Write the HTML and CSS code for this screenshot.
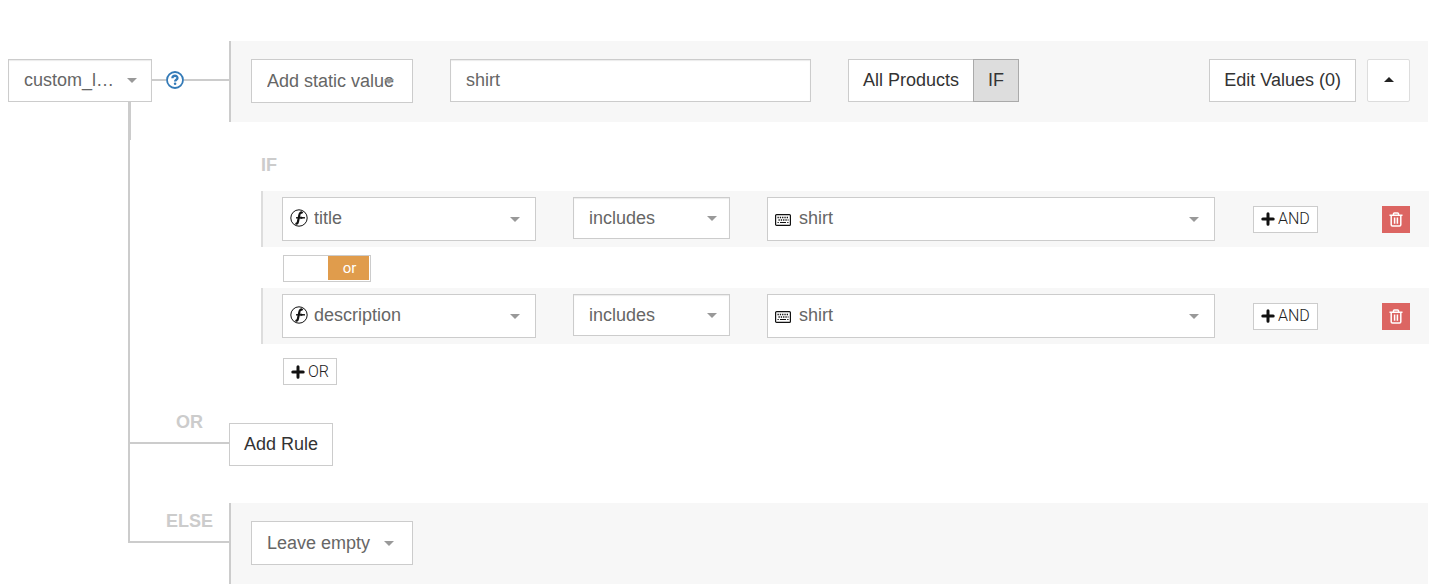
FILE: index.html
```html
<!DOCTYPE html>
<html lang="en">
<head>
  <meta charset="utf-8">
  <title>Edit Rules</title>
  <link rel="stylesheet" href="styles.css">
</head>
<body>
  <svg class="sprite" aria-hidden="true">
    <symbol id="icon-function" viewBox="0 0 18 18">
      <circle cx="9" cy="9" r="8.2" fill="none" stroke="#111" stroke-width="1"/>
      <path d="M12.4 4.4C11.2 2.6 9.8 3.6 9.3 6.2L8 12.4c-.4 2-1.2 2.8-2.6 2" fill="none" stroke="#111" stroke-width="2.2"/>
      <path d="M6 8.8h9" stroke="#111" stroke-width="1.4"/>
      <path d="M10.5 7.3l3.2 1.5-3.2 1.4z" fill="#111"/>
    </symbol>
    <symbol id="icon-keyboard" viewBox="0 0 16 12">
      <rect x=".6" y=".6" width="14.8" height="10.8" rx="1" fill="#fff" stroke="#111" stroke-width="1.2"/>
      <path d="M2.5 3.5h11M3.5 6h10" stroke="#111" stroke-width="1.3" stroke-dasharray="1.3 1"/>
      <path d="M2.5 8.5h1.3M5 8.5h6M12.2 8.5h1.3" stroke="#111" stroke-width="1.2"/>
    </symbol>
    <symbol id="icon-plus" viewBox="0 0 14 14">
      <path d="M7 1.8v10.4M1.8 7h10.4" stroke="#111" stroke-width="3" stroke-linecap="round"/>
    </symbol>
    <symbol id="icon-trash" viewBox="0 0 14 15">
      <path d="M.5 3.2h13M4.5 3V1.7q0-.8.8-.8h3.4q.8 0 .8.8V3M2.2 3.5v9.3q0 1.2 1.2 1.2h7.2q1.2 0 1.2-1.2V3.5M5.6 5.5v6.3M8.4 5.5v6.3" fill="none" stroke="#fff" stroke-width="1.5"/>
    </symbol>
  </svg>

  <main class="rules">
    <div class="rule">
      <div class="branch">
        <div class="branch-head">
          <div class="select select-attribute">
            <select aria-label="Attribute">
              <option>custom_l…</option>
            </select>
          </div>
          <span class="line line-short"></span>
          <button type="button" class="btn-help" aria-label="Help">
            <svg viewBox="0 0 18 18" width="18" height="18">
              <circle cx="9" cy="9" r="8" fill="#fff" stroke="#337ab7" stroke-width="1.8"/>
              <path d="M6.4 7.2C6.5 3.9 11.6 4 11.5 7c0 1.7-2.4 1.7-2.4 3.4" fill="none" stroke="#337ab7" stroke-width="2.3"/>
              <circle cx="9.1" cy="12.8" r="1.3" fill="#337ab7"/>
            </svg>
          </button>
          <span class="line"></span>
        </div>
        <div class="stem stem-thick"></div>
      </div>
      <div class="panel">
        <div class="select select-type">
          <select aria-label="Value type">
            <option>Add static value</option>
          </select>
        </div>
        <input type="text" class="static-value" value="shirt" aria-label="Static value">
        <div class="btn-group">
          <button type="button" class="btn">All Products</button>
          <button type="button" class="btn active">IF</button>
        </div>
        <div class="panel-actions">
          <button type="button" class="btn">Edit Values (0)</button>
          <button type="button" class="btn btn-collapse" aria-label="Collapse"></button>
        </div>
      </div>
    </div>

    <div class="rule">
      <div class="branch">
        <div class="stem stem-thick stem-end"></div>
        <div class="stem"></div>
      </div>
      <div class="conditions">
        <h2 class="keyword">IF</h2>
        <div class="condition">
          <div class="select select-icon">
            <svg class="icon-function"><use href="#icon-function"/></svg>
            <select aria-label="Field">
              <option>title</option>
            </select>
          </div>
          <div class="select select-operator">
            <select aria-label="Operator">
              <option>includes</option>
            </select>
          </div>
          <div class="select select-icon">
            <svg class="icon-keyboard"><use href="#icon-keyboard"/></svg>
            <select aria-label="Value">
              <option>shirt</option>
            </select>
          </div>
          <div class="condition-actions">
            <button type="button" class="btn-small"><svg><use href="#icon-plus"/></svg>AND</button>
            <button type="button" class="btn-delete" aria-label="Delete"><svg><use href="#icon-trash"/></svg></button>
          </div>
        </div>

        <label class="toggle">
          <input type="checkbox" aria-label="or" checked>
          <span class="toggle-on">or</span>
        </label>

        <div class="condition">
          <div class="select select-icon">
            <svg class="icon-function"><use href="#icon-function"/></svg>
            <select aria-label="Field">
              <option>description</option>
            </select>
          </div>
          <div class="select select-operator">
            <select aria-label="Operator">
              <option>includes</option>
            </select>
          </div>
          <div class="select select-icon">
            <svg class="icon-keyboard"><use href="#icon-keyboard"/></svg>
            <select aria-label="Value">
              <option>shirt</option>
            </select>
          </div>
          <div class="condition-actions">
            <button type="button" class="btn-small"><svg><use href="#icon-plus"/></svg>AND</button>
            <button type="button" class="btn-delete" aria-label="Delete"><svg><use href="#icon-trash"/></svg></button>
          </div>
        </div>

        <button type="button" class="btn-small btn-or"><svg><use href="#icon-plus"/></svg>OR</button>
      </div>
    </div>

    <div class="rule rule-add">
      <div class="branch">
        <div class="joint keyword">OR</div>
        <div class="stem"></div>
      </div>
      <button type="button" class="btn">Add Rule</button>
    </div>

    <div class="rule">
      <div class="branch">
        <div class="joint keyword">ELSE</div>
      </div>
      <div class="panel">
        <div class="select select-type">
          <select aria-label="Otherwise">
            <option>Leave empty</option>
          </select>
        </div>
      </div>
    </div>
  </main>
</body>
</html>
```

FILE: styles.css
```css
* {
  box-sizing: border-box;
}

body {
  margin: 0;
  background-color: #fff;
  color: #333;
  font-family: "Liberation Sans", Arial, sans-serif;
  font-size: 18px;
  line-height: 22px;
}

button, input, select {
  font: inherit;
}

.sprite {
  position: absolute;
  width: 0;
  height: 0;
}

.rules {
  padding: 41px 0 0 8px;
}

.rule {
  display: flex;
}

/* tree lines on the left */
.branch {
  display: flex;
  flex-direction: column;
  flex: none;
  width: 221px;
}

.branch-head {
  display: flex;
  align-items: center;
  padding-top: 18px;
}

.line {
  flex: 1;
  height: 2px;
  margin-bottom: 2px;
  background-color: #ccc;
}

.line-short {
  flex: none;
  width: 14px;
}

.stem {
  flex: 1;
  margin-left: 120px;
  border-left: 2px solid #ccc;
}

.stem-thick {
  border-left-width: 3px;
}

.stem-end {
  flex: none;
  height: 18px;
}

.joint {
  display: flex;
  justify-content: center;
  align-items: flex-end;
  height: 40px;
  margin-left: 120px;
  padding: 0 0 9px 20px;
  border-left: 2px solid #ccc;
  border-bottom: 2px solid #ccc;
}

.keyword {
  color: #ccc;
  font-size: 18px;
  font-weight: bold;
}

.btn-help {
  display: flex;
  padding: 0 0 2px;
  border: none;
  background: none;
  cursor: pointer;
}

/* panels */
.panel {
  display: flex;
  flex: 1;
  align-items: flex-start;
  gap: 37px;
  min-height: 81px;
  margin-right: 1px;
  padding: 18px 18px 18px 20px;
  border-left: 2px solid #ccc;
  background-color: #f7f7f7;
}

.panel-actions {
  display: flex;
  gap: 11px;
  margin-left: auto;
}

.select {
  position: relative;
}

.select select {
  display: block;
  width: 100%;
  height: 44px;
  padding: 0 15px;
  border: 1px solid #ccc;
  border-radius: 0;
  background-color: #fff;
  color: #666;
  appearance: none;
}

.select::after {
  content: "";
  position: absolute;
  top: 20px;
  right: 16px;
  border: 5px solid transparent;
  border-top-color: #999;
  border-bottom: none;
  pointer-events: none;
}

.select-attribute {
  width: 144px;
}

.select-attribute::after {
  top: 19px;
  right: 15px;
}

.select-attribute select {
  height: 43px;
  padding-bottom: 2px;
  box-shadow: inset 0 1px 1px rgba(0, 0, 0, 0.08);
}

.select-type {
  width: 162px;
}

.select-type::after {
  right: 19px;
}

.select-operator select {
  height: 42px;
  box-shadow: inset 0 1px 1px rgba(0, 0, 0, 0.08);
}

.select-operator::after {
  top: 19px;
  right: 13px;
}

.select-icon select {
  padding: 0 31px 2px;
}

.select-icon svg {
  position: absolute;
  left: 8px;
}

.icon-function {
  top: 12px;
  width: 18px;
  height: 18px;
}

.icon-keyboard {
  top: 17px;
  width: 16px;
  height: 12px;
}

.static-value {
  flex: 0 1 361px;
  min-width: 0;
  height: 43px;
  padding: 0 15px;
  border: 1px solid #ccc;
  box-shadow: inset 0 1px 1px rgba(0, 0, 0, 0.08);
  color: #666;
}

.btn {
  height: 43px;
  padding: 0 14px 2px;
  border: 1px solid #ccc;
  background-color: #fff;
  color: #333;
  cursor: pointer;
}

.btn:hover {
  background-color: #eee;
}

.btn-group {
  display: flex;
}

.btn-group .active {
  margin-left: -1px;
  border-color: #aaa;
  background-color: #ddd;
}

.btn-collapse {
  display: flex;
  justify-content: center;
  align-items: center;
  width: 43px;
  padding: 0 0 2px;
  border: 1px solid #ddd;
  border-radius: 2px;
}

.btn-collapse::before {
  content: "";
  border: 5px solid transparent;
  border-top: none;
  border-bottom-color: #222;
}

/* conditions */
.conditions {
  flex: 1;
  padding: 32px 0 19px 32px;
}

.conditions h2 {
  margin: 0 0 15px;
}

.condition {
  display: grid;
  grid-template-columns: 254fr 157fr 448fr 158px;
  column-gap: 37px;
  height: 56px;
  padding: 6px 19px;
  border-left: 2px solid #ddd;
  background-color: #f7f7f7;
}

.condition-actions {
  display: flex;
  justify-content: space-between;
  align-items: center;
  padding-left: 1px;
}

.btn-small {
  display: flex;
  align-items: center;
  gap: 3px;
  height: 27px;
  padding: 0 7px;
  border: 1px solid #ccc;
  background-color: #fff;
  color: #222;
  font-family: Roboto, sans-serif;
  font-size: 16px;
  font-weight: 300;
  cursor: pointer;
}

.btn-small svg {
  width: 14px;
  height: 14px;
}

.btn-or {
  margin: 14px 0 0 22px;
}

.btn-delete {
  display: flex;
  justify-content: center;
  align-items: center;
  width: 28px;
  height: 27px;
  padding: 0;
  border: none;
  background-color: #dc6562;
  cursor: pointer;
}

.btn-delete svg {
  width: 14px;
  height: 15px;
}

.toggle {
  display: flex;
  position: relative;
  justify-content: flex-end;
  width: 88px;
  height: 27px;
  margin: 8px 0 6px 22px;
  padding: 0 1px 1px 0;
  border: 1px solid #ccc;
  background-color: #fff;
  cursor: pointer;
}

.toggle input {
  position: absolute;
  inset: 0;
  margin: 0;
  opacity: 0;
}

.toggle-on {
  width: 41px;
  padding-left: 2px;
  background-color: #e09c4c;
  color: #fff;
  font-family: Roboto, sans-serif;
  font-size: 15px;
  font-weight: 400;
  line-height: 24px;
  text-align: center;
}

.rule-add .btn {
  margin: 19px 0 37px;
}
```
